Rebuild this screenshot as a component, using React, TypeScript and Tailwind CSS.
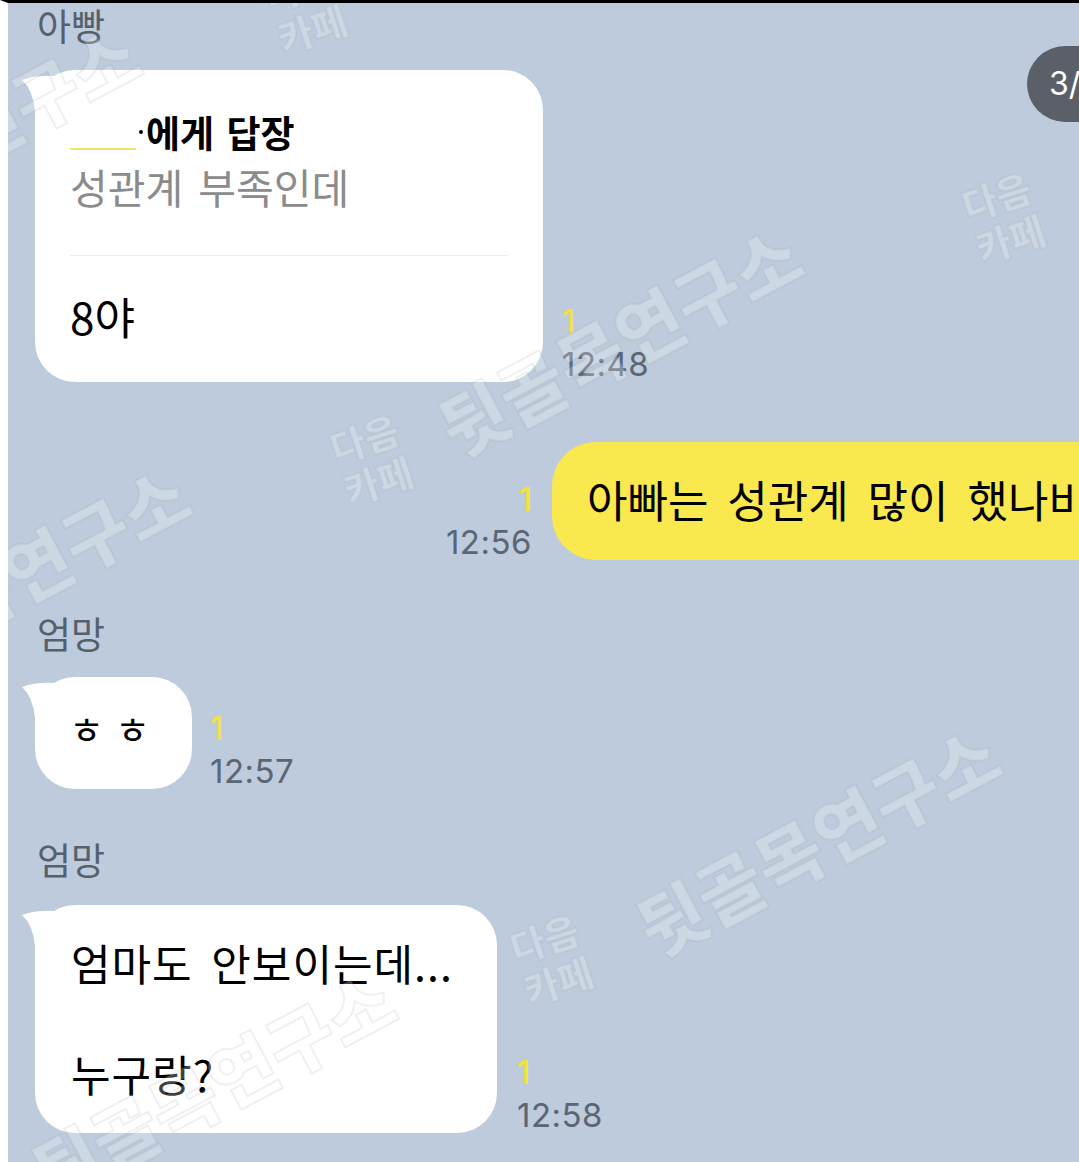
import type { FC, ReactNode } from "react";

const Tail: FC = () => (
  <svg
    className="absolute -left-[13px] top-[5px]"
    width="34"
    height="36"
    viewBox="0 0 34 36"
  >
    <path d="M0 5 Q 14 0 32 1 L 34 36 L 13 36 Q 11 15 0 5 Z" fill="#ffffff" />
  </svg>
);

const Meta: FC<{ time: string; right?: boolean }> = ({ time, right }) => (
  <div
    className={
      right
        ? "flex w-[100px] shrink-0 flex-col items-end font-['Inter',sans-serif]"
        : "flex shrink-0 flex-col items-start font-['Inter',sans-serif]"
    }
  >
    <span className="text-[32px] leading-[36px] font-medium text-[#f3e23c]">1</span>
    <span className="mt-[6px] text-[33px] leading-[36px] tracking-[0.5px] text-[#5a6674]">
      {time}
    </span>
  </div>
);

const Name: FC<{ children: ReactNode; className: string }> = ({ children, className }) => (
  <div className={`pl-[29px] text-[37px] leading-[42px] text-[#56606c] ${className}`}>
    {children}
  </div>
);

const Watermarks: FC = () => (
  <div className="pointer-events-none absolute inset-0 font-['Noto_Sans_CJK_KR',sans-serif] font-black text-white/25 [-webkit-text-stroke:2px_rgba(140,150,160,0.14)]">
    <span className="absolute left-[412px] top-[300px] -rotate-[28deg] whitespace-nowrap text-[72px] leading-none">
      뒷골목연구소
    </span>
    <span className="absolute -left-[200px] top-[540px] -rotate-[28deg] whitespace-nowrap text-[72px] leading-none">
      뒷골목연구소
    </span>
    <span className="absolute left-[610px] top-[800px] -rotate-[28deg] whitespace-nowrap text-[72px] leading-none">
      뒷골목연구소
    </span>
    <span className="absolute left-[5px] top-[1045px] -rotate-[28deg] whitespace-nowrap text-[72px] leading-none">
      뒷골목연구소
    </span>
    <span className="absolute -left-[250px] top-[100px] -rotate-[28deg] whitespace-nowrap text-[72px] leading-none">
      뒷골목연구소
    </span>
    <span className="absolute left-[960px] top-[170px] -rotate-[18deg] text-[38px] leading-[44px]">
      다음
      <br />
      카페
    </span>
    <span className="absolute left-[328px] top-[412px] -rotate-[18deg] text-[38px] leading-[44px]">
      다음
      <br />
      카페
    </span>
    <span className="absolute left-[508px] top-[912px] -rotate-[18deg] text-[38px] leading-[44px]">
      다음
      <br />
      카페
    </span>
    <span className="absolute left-[262px] -top-[40px] -rotate-[18deg] text-[38px] leading-[44px]">
      다음
      <br />
      카페
    </span>
  </div>
);

export default function App() {
  return (
    <div className="relative h-[1162px] w-[1079px] overflow-hidden border-t-[3px] border-l-[8px] border-t-black border-l-white bg-[#bdcbdc] font-['Noto_Sans_CJK_KR','Noto_Sans',sans-serif]">
      <div className="flex flex-col">
        <Name className="mt-[1px]">아빵</Name>

        {/* reply bubble */}
        <div className="mt-[24px] flex items-end pl-[27px]">
          <div className="relative h-[312px] w-[508px] shrink-0 rounded-[40px] bg-white px-[35px] pt-[40px]">
            <Tail />
            <div className="flex items-center text-[37px] leading-[44px] font-bold text-black [word-spacing:4px]">
              <span className="mt-[14px] inline-block h-[22px] w-[66px] border-b-[2px] border-[#f1e36a]" />
              <span className="mx-[3px] inline-block h-[4px] w-[4px] rounded-full bg-black" />
              <span>에게 답장</span>
            </div>
            <div className="mt-[9px] text-[41px] leading-[46px] text-[#8b8b8b] [word-spacing:6px]">
              성관계 부족인데
            </div>
            <div className="mt-[46px] h-px bg-[#ececec]" />
            <div className="mt-[37px] text-[44px] leading-[46px] text-black">8야</div>
          </div>
          <div className="ml-[19px]">
            <Meta time="12:48" />
          </div>
        </div>

        {/* my message */}
        <div className="mt-[60px] flex items-end pl-[424px]">
          <Meta time="12:56" right />
          <div className="ml-[20px] h-[118px] shrink-0 whitespace-nowrap rounded-[44px] bg-[#fae84f] pl-[35px] pr-[40px] pt-[34px] text-[44px] leading-[46px] text-black [word-spacing:9px]">
            아빠는 성관계 많이 했나비
          </div>
        </div>

        <Name className="mt-[52px]">엄망</Name>

        <div className="mt-[23px] flex items-end pl-[27px]">
          <div className="relative h-[112px] w-[157px] shrink-0 rounded-[40px] bg-white pl-[34px] pt-[31px] text-[38px] leading-[40px] tracking-[11px] text-black">
            <Tail />
            ㅎㅎ
          </div>
          <div className="ml-[18px]">
            <Meta time="12:57" />
          </div>
        </div>

        <Name className="mt-[49px]">엄망</Name>

        <div className="mt-[25px] flex items-end pl-[27px]">
          <div className="relative h-[228px] w-[462px] shrink-0 rounded-[40px] bg-white pl-[36px] pt-[33px] text-[43px] leading-[48px] tracking-[1px] text-black [word-spacing:8px]">
            <Tail />
            <div>엄마도 안보이는데...</div>
            <div className="mt-[63px]">누구랑?</div>
          </div>
          <div className="ml-[20px]">
            <Meta time="12:58" />
          </div>
        </div>
      </div>

      <Watermarks />

      <div className="absolute left-[1019px] top-[43px] flex h-[76px] w-[110px] items-center rounded-full bg-[#5b6068] pl-[22px] font-['Inter',sans-serif] text-[32px] text-white">
        3/
      </div>
    </div>
  );
}
